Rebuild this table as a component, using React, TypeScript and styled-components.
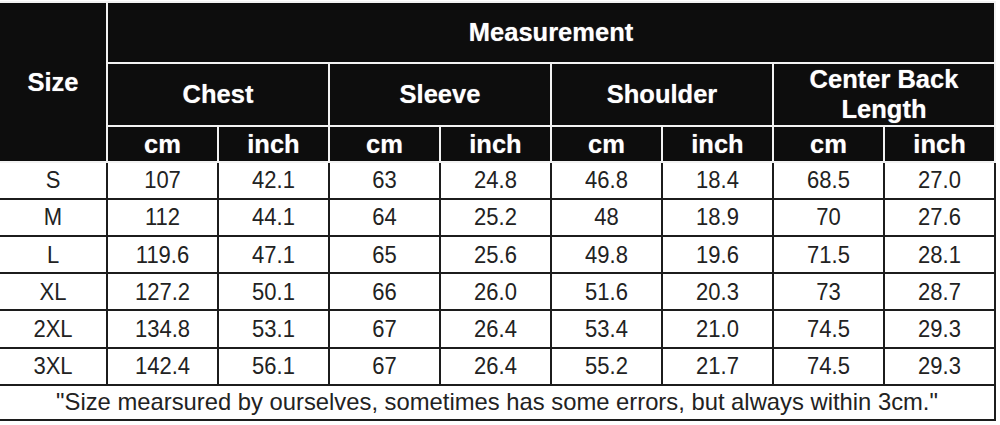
import styled, { createGlobalStyle } from "styled-components";

const GlobalStyle = createGlobalStyle`
  html, body {
    margin: 0;
    padding: 0;
    background: #ffffff;
  }
  body {
    font-family: "Liberation Sans", Arial, sans-serif;
  }
`;

const Page = styled.div`
  width: 1000px;
  height: 425px;
  padding-top: 1px;
  box-sizing: border-box;
  overflow: hidden;
`;

const Table = styled.table`
  width: 996px;
  table-layout: fixed;
  border-collapse: collapse;
  border-top: 2px solid #d4d4d4;
`;

const HeadCell = styled.th`
  background: #0d0d0d;
  color: #ffffff;
  font-weight: 700;
  font-size: 25.5px;
  line-height: 1.19;
  text-align: center;
  vertical-align: middle;
  padding: 0;
  border: 2px solid #f2f2f2;
  text-shadow: 0 0 1px rgba(255, 255, 255, 0.6);

  &:first-child {
    border-left: none;
  }
`;

const HeadRow = styled.tr<{ $h: number }>`
  height: ${({ $h }) => $h}px;
`;

const BodyRow = styled.tr`
  height: 37.2px;
`;

const Cell = styled.td`
  color: #222222;
  font-size: 22px;
  text-align: center;
  vertical-align: middle;
  padding: 0;
  border: 2px solid #1c1c1c;

  &:first-child {
    border-left: none;
  }
`;

const Tall = styled.span`
  display: inline-block;
  transform: scaleY(1.12);
`;

const Note = styled.td`
  color: #222222;
  font-size: 23.8px;
  text-align: center;
  vertical-align: middle;
  padding: 0;
  height: 33px;
  border: 2px solid #1c1c1c;
  border-left: none;
`;

const groups = ["Chest", "Sleeve", "Shoulder", "Center Back Length"];

const rows: string[][] = [
  ["S", "107", "42.1", "63", "24.8", "46.8", "18.4", "68.5", "27.0"],
  ["M", "112", "44.1", "64", "25.2", "48", "18.9", "70", "27.6"],
  ["L", "119.6", "47.1", "65", "25.6", "49.8", "19.6", "71.5", "28.1"],
  ["XL", "127.2", "50.1", "66", "26.0", "51.6", "20.3", "73", "28.7"],
  ["2XL", "134.8", "53.1", "67", "26.4", "53.4", "21.0", "74.5", "29.3"],
  ["3XL", "142.4", "56.1", "67", "26.4", "55.2", "21.7", "74.5", "29.3"],
];

export default function App() {
  return (
    <Page>
      <GlobalStyle />
      <Table>
        <colgroup>
          <col style={{ width: 107 }} />
          {Array.from({ length: 8 }).map((_, i) => (
            <col key={i} style={{ width: 111 }} />
          ))}
        </colgroup>
        <thead>
          <HeadRow $h={61}>
            <HeadCell rowSpan={3}>Size</HeadCell>
            <HeadCell colSpan={8}>Measurement</HeadCell>
          </HeadRow>
          <HeadRow $h={62}>
            {groups.map((g) => (
              <HeadCell key={g} colSpan={2}>
                {g === "Center Back Length" ? (
                  <>
                    Center Back
                    <br />
                    Length
                  </>
                ) : (
                  g
                )}
              </HeadCell>
            ))}
          </HeadRow>
          <HeadRow $h={36}>
            {groups.flatMap((g) => [
              <HeadCell key={g + "cm"}>cm</HeadCell>,
              <HeadCell key={g + "in"}>inch</HeadCell>,
            ])}
          </HeadRow>
        </thead>
        <tbody>
          {rows.map((r) => (
            <BodyRow key={r[0]}>
              {r.map((v, i) => (
                <Cell key={i}>
                  <Tall>{v}</Tall>
                </Cell>
              ))}
            </BodyRow>
          ))}
          <tr>
            <Note colSpan={9}>
              "Size mearsured by ourselves, sometimes has some errors, but always within 3cm."
            </Note>
          </tr>
        </tbody>
      </Table>
    </Page>
  );
}
